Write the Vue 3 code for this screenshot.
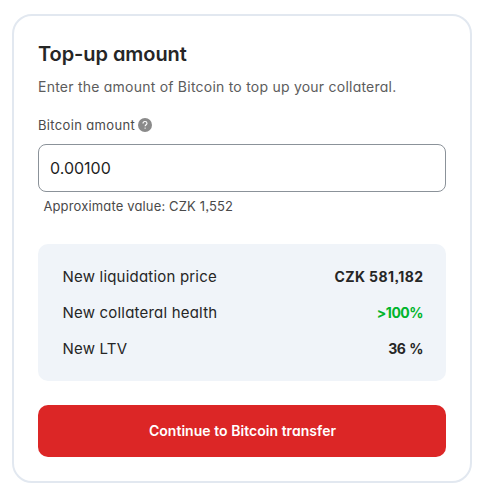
<script setup>
import { ref } from 'vue'

const amount = ref('0.00100')
const rows = [
  { label: 'New liquidation price', value: 'CZK 581,182', kind: 'price' },
  { label: 'New collateral health', value: '>100%', kind: 'good' },
  { label: 'New LTV', value: '36 %', kind: 'ltv' },
]
</script>

<template>
  <main class="card">
    <h1 class="title">Top-up amount</h1>
    <p class="subtitle">Enter the amount of Bitcoin to top up your collateral.</p>
    <label class="label" for="amount">
      <span>Bitcoin amount</span>
      <svg class="help" viewBox="0 0 14 14" aria-hidden="true">
        <circle cx="7" cy="7" r="7" fill="#8a8a8a" />
        <path d="M5 5.5C5 4.3 5.9 3.5 7 3.5s2 .8 2 1.8c0 1.3-1.9 1.6-1.9 3" fill="none" stroke="#fff" stroke-width="1.1" />
        <circle cx="7.1" cy="10.1" r=".7" fill="#fff" />
      </svg>
    </label>
    <input id="amount" v-model="amount" class="field" type="text" />
    <p class="hint">Approximate value: CZK 1,552</p>
    <dl class="summary">
      <div v-for="row in rows" :key="row.label" class="row">
        <dt>{{ row.label }}</dt>
        <dd :class="row.kind">{{ row.value }}</dd>
      </div>
    </dl>
    <button class="submit" type="button">Continue to Bitcoin transfer</button>
  </main>
</template>

<style>
body {
  background: #fff;
}
</style>

<style scoped>
.card {
  box-sizing: border-box;
  display: flex;
  flex-direction: column;
  width: 460px;
  height: 469px;
  margin: 14px 0 0 12px;
  padding: 24px;
  border: 2px solid #e2e8f0;
  border-radius: 20px;
  font-family: Inter, "Open Sans", sans-serif;
  font-feature-settings: "cv11", "ss03";
  color: #262626;
  white-space: nowrap;
}
.title {
  margin: 0;
  font-size: 20px;
  line-height: 28px;
  font-weight: 600;
  letter-spacing: -0.06px;
}
.subtitle {
  margin: 8px 0 0;
  font-size: 14px;
  line-height: 22px;
  letter-spacing: 0.23px;
  color: #5c5c5c;
}
.label {
  display: flex;
  align-items: center;
  gap: 3px;
  height: 20px;
  margin-top: 17px;
  font-size: 13px;
  letter-spacing: 0.35px;
  color: #4a4a4a;
}
.help {
  width: 14px;
  height: 14px;
}
.field {
  box-sizing: border-box;
  width: 100%;
  height: 48px;
  margin: 9px 0 0;
  padding: 0 11px;
  border: 1px solid #8b9299;
  border-radius: 8px;
  background: #fff;
  color: #1f1f1f;
  font: inherit;
  font-size: 16px;
  outline: none;
}
.hint {
  margin: 4px 0 0;
  padding-left: 5.4px;
  font-size: 13px;
  line-height: 20px;
  letter-spacing: 0.15px;
  color: #4a4a4a;
}
.summary {
  box-sizing: border-box;
  height: 137px;
  margin: 28px 0 0;
  padding: 14px 23px 15px 24.5px;
  border-radius: 10px;
  background: #f0f4f9;
  font-size: 15px;
  letter-spacing: 0.2px;
}
.row {
  display: flex;
  align-items: center;
  justify-content: space-between;
  height: 36px;
}
dd {
  margin: 0;
  font-size: 14px;
  font-weight: 700;
  letter-spacing: -0.5px;
}
.price {
  margin-right: -0.4px;
  letter-spacing: 0.4px;
}
.good {
  color: #00b52c;
}
.ltv {
  word-spacing: 1px;
}
.submit {
  height: 52px;
  margin: 24px 0 0;
  padding: 0 0 2px 1px;
  border: 0;
  border-radius: 10px;
  background: #dc2626;
  color: #fff;
  font: inherit;
  font-size: 14px;
  font-weight: 600;
  letter-spacing: 0.04px;
}
</style>
